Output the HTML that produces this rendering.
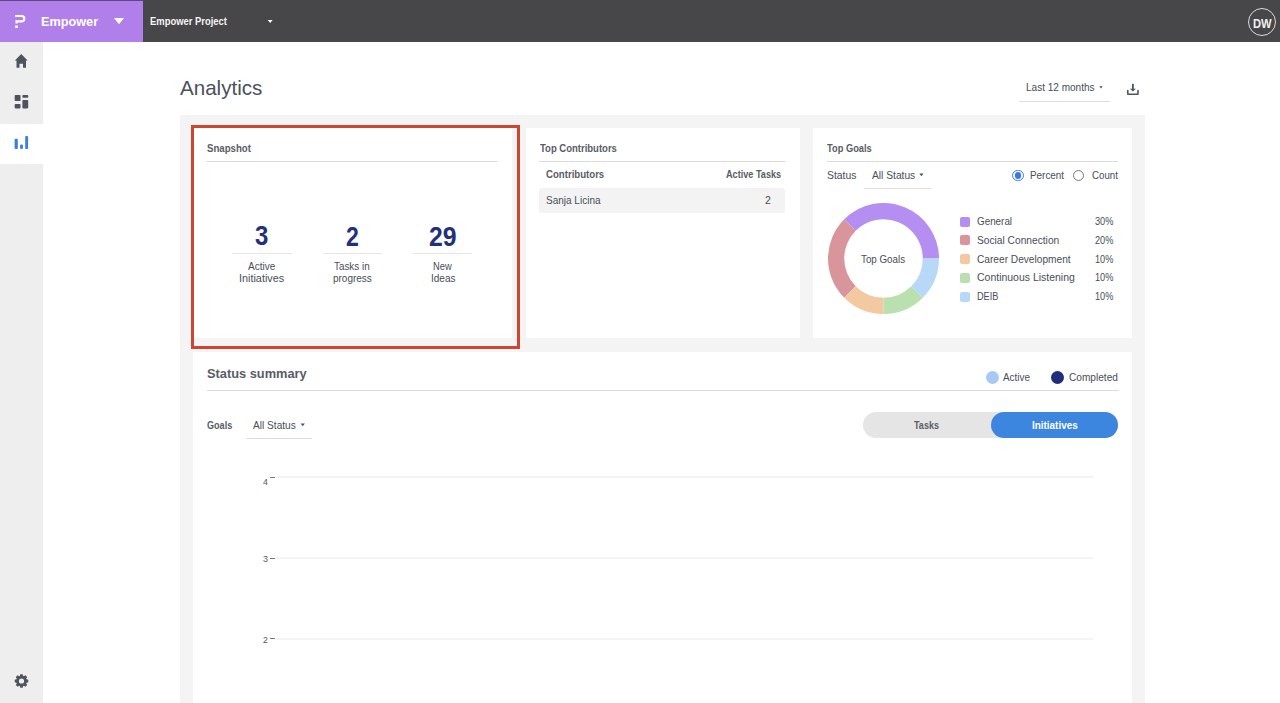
<!DOCTYPE html>
<html><head><meta charset="utf-8"><style>
html,body{margin:0;padding:0;}
body{width:1280px;height:703px;overflow:hidden;position:relative;background:#fff;font-family:"Liberation Sans", sans-serif;}
.a{position:absolute;}
.t{position:absolute;white-space:nowrap;}
</style></head><body>
<!-- top bar -->
<div class="a" style="left:0;top:0;width:1280px;height:42px;background:#474648"></div>
<div class="a" style="left:0;top:0;width:143px;height:42px;background:#b07fe9"></div>
<div class="a" style="left:0;top:0;width:143px;height:1px;background:#5f4486"></div>
<svg class="a" style="left:0;top:0" width="143" height="42">
  <path d="M15.1 16 H21.6 A2.65 2.65 0 0 1 21.6 21.3 H16.5 V23.6" fill="none" stroke="#fff" stroke-width="2.2"/>
  <rect x="15.1" y="25.5" width="2.8" height="2.4" fill="#fff"/>
  <path d="M114 18 L124 18 L119 24.3 Z" fill="#fff"/>
</svg>
<svg class="a" style="left:260px;top:15px" width="20" height="12">
  <path d="M7.8 5 L12.6 5 L10.2 7.9 Z" fill="#fff"/>
</svg>
<div class="a" style="left:1248px;top:8px;width:28px;height:28px;border:1.5px solid #dcdcdc;border-radius:50%;box-sizing:border-box"></div>
<!-- sidebar -->
<div class="a" style="left:0;top:42px;width:43px;height:661px;background:#eeeeee"></div>
<div class="a" style="left:0;top:124px;width:43px;height:40px;background:#ffffff"></div>
<svg class="a" style="left:0;top:42px" width="43" height="661">
  <path d="M21.2 12 L27.6 18.6 L26 18.6 L26 25.7 L23 25.7 L23 21.7 L19.5 21.7 L19.5 25.7 L16.5 25.7 L16.5 18.6 L14.9 18.6 Z" fill="#4e535d"/>
  <rect x="14.7" y="53" width="5.8" height="6" rx="0.8" fill="#4e535d"/>
  <rect x="14.7" y="62" width="5.8" height="4.4" rx="0.8" fill="#4e535d"/>
  <rect x="22.4" y="53" width="5.8" height="2.8" rx="0.8" fill="#4e535d"/>
  <rect x="22.4" y="58" width="5.8" height="8.4" rx="0.8" fill="#4e535d"/>
  <rect x="14.6" y="96.8" width="3.2" height="10.3" rx="1" fill="#3c7fd6"/>
  <rect x="20.1" y="102.5" width="2.8" height="4.6" rx="1" fill="#3c7fd6"/>
  <rect x="25.2" y="94" width="2.9" height="13.1" rx="1" fill="#3c7fd6"/>
</svg>
<svg class="a" style="left:0;top:0" width="43" height="703"><path fill="#4e535d" fill-rule="evenodd" d="M19.83 675.97 L20.26 674.21 L22.74 674.21 L23.17 675.97 L23.87 676.26 L25.42 675.32 L27.18 677.08 L26.24 678.63 L26.53 679.33 L28.29 679.76 L28.29 682.24 L26.53 682.67 L26.24 683.37 L27.18 684.92 L25.42 686.68 L23.87 685.74 L23.17 686.03 L22.74 687.79 L20.26 687.79 L19.83 686.03 L19.13 685.74 L17.58 686.68 L15.82 684.92 L16.76 683.37 L16.47 682.67 L14.71 682.24 L14.71 679.76 L16.47 679.33 L16.76 678.63 L15.82 677.08 L17.58 675.32 L19.13 676.26 Z M18.90 681 A2.6 2.6 0 1 0 24.10 681 A2.6 2.6 0 1 0 18.90 681 Z"/></svg>
<!-- header controls -->
<svg class="a" style="left:1090px;top:80px" width="60" height="20">
  <path d="M9.2 6.2 L12.8 6.2 L11 8.6 Z" fill="#4e535d"/>
  <rect x="42" y="3.8" width="1.8" height="5.4" fill="#50555e"/>
  <path d="M39.9 8.7 L45.9 8.7 L42.9 11.5 Z" fill="#50555e"/>
  <path d="M37.8 10.6 V14.2 H48 V10.6" fill="none" stroke="#50555e" stroke-width="1.6" stroke-linejoin="round" stroke-linecap="round"/>
</svg>
<div class="a" style="left:1019px;top:100.5px;width:91px;height:1px;background:#dedede"></div>
<!-- container -->
<div class="a" style="left:180px;top:115px;width:965px;height:588px;background:#f4f4f4"></div>
<div class="a" style="left:193px;top:128px;width:319px;height:210px;background:#fff"></div>
<div class="a" style="left:526px;top:128px;width:274px;height:210px;background:#fff"></div>
<div class="a" style="left:813px;top:128px;width:319px;height:210px;background:#fff"></div>
<div class="a" style="left:193px;top:352px;width:939px;height:351px;background:#fff"></div>
<div class="a" style="left:191px;top:125px;width:329px;height:223.5px;border:3px solid #cf4534;box-sizing:border-box"></div>
<!-- underlines -->
<div class="a" style="left:206px;top:161px;width:292px;height:1px;background:#dcdcdc"></div>
<div class="a" style="left:539px;top:161px;width:247px;height:1px;background:#dcdcdc"></div>
<div class="a" style="left:827px;top:161px;width:291px;height:1px;background:#dcdcdc"></div>
<div class="a" style="left:207px;top:390px;width:912px;height:1px;background:#dcdcdc"></div>
<!-- snapshot dividers -->
<div class="a" style="left:232px;top:253px;width:60px;height:1px;background:#e6e6e6"></div>
<div class="a" style="left:323px;top:253px;width:59px;height:1px;background:#e6e6e6"></div>
<div class="a" style="left:413px;top:253px;width:59px;height:1px;background:#e6e6e6"></div>
<!-- TC row -->
<div class="a" style="left:539px;top:188px;width:246px;height:24.5px;background:#f3f3f3;border-radius:3px"></div>
<!-- TG controls -->
<div class="a" style="left:864px;top:188px;width:67px;height:1px;background:#dedede"></div>
<svg class="a" style="left:900px;top:160px" width="40" height="30">
  <path d="M19.3 13.4 L23.6 13.4 L21.45 16.2 Z" fill="#4e535d"/>
</svg>
<div class="a" style="left:1012.3px;top:169.7px;width:11.4px;height:11.4px;border:1px solid #3b78e7;border-radius:50%;box-sizing:border-box;background:#fff"></div>
<div class="a" style="left:1014.8px;top:172.2px;width:6.4px;height:6.4px;border-radius:50%;background:#3b78e7"></div>
<div class="a" style="left:1072.9px;top:169.7px;width:11.4px;height:11.4px;border:1px solid #777;border-radius:50%;box-sizing:border-box;background:#fff"></div>
<!-- donut -->
<svg class="a" style="left:823px;top:198px" width="121" height="121" viewBox="-60.5 -60.5 121 121">
  <path d="M-39.244 -39.244 A55.5 55.5 0 0 1 55.500 -0.000 L39.300 -0.000 A39.3 39.3 0 0 0 -27.789 -27.789 Z" fill="#b48ef0"/><path d="M-39.244 39.244 A55.5 55.5 0 0 1 -39.244 -39.244 L-27.789 -27.789 A39.3 39.3 0 0 0 -27.789 27.789 Z" fill="#d9959c"/><path d="M0.000 55.500 A55.5 55.5 0 0 1 -39.244 39.244 L-27.789 27.789 A39.3 39.3 0 0 0 0.000 39.300 Z" fill="#f2c9a1"/><path d="M39.244 39.244 A55.5 55.5 0 0 1 0.000 55.500 L0.000 39.300 A39.3 39.3 0 0 0 27.789 27.789 Z" fill="#b9e0ae"/><path d="M55.500 -0.000 A55.5 55.5 0 0 1 39.244 39.244 L27.789 27.789 A39.3 39.3 0 0 0 39.300 -0.000 Z" fill="#b8d8f8"/>
</svg>
<!-- legend swatches -->
<div class="a" style="left:960px;top:216.5px;width:10px;height:10px;border-radius:2px;background:#b48ef0"></div>
<div class="a" style="left:960px;top:235.3px;width:10px;height:10px;border-radius:2px;background:#d9959c"></div>
<div class="a" style="left:960px;top:254.1px;width:10px;height:10px;border-radius:2px;background:#f2c9a1"></div>
<div class="a" style="left:960px;top:272.9px;width:10px;height:10px;border-radius:2px;background:#b9e0ae"></div>
<div class="a" style="left:960px;top:291.7px;width:10px;height:10px;border-radius:2px;background:#b8d8f8"></div>
<!-- status legend -->
<div class="a" style="left:985.9px;top:371.1px;width:13.4px;height:13.4px;border-radius:50%;background:#a9c9f5"></div>
<div class="a" style="left:1050.9px;top:371.1px;width:13.4px;height:13.4px;border-radius:50%;background:#1f2e7b"></div>
<!-- goals select -->
<div class="a" style="left:246px;top:438px;width:66px;height:1px;background:#dedede"></div>
<svg class="a" style="left:290px;top:415px" width="20" height="20">
  <path d="M10.6 8.4 L14.9 8.4 L12.75 11.2 Z" fill="#4e535d"/>
</svg>
<!-- toggle -->
<div class="a" style="left:863px;top:411.75px;width:255.25px;height:26.5px;border-radius:13.25px;background:#e5e5e5"></div>
<div class="a" style="left:990.5px;top:411.75px;width:127.75px;height:26.5px;border-radius:13.25px;background:#3d86df"></div>
<!-- chart -->
<div class="a" style="left:276px;top:476px;width:817px;height:2px;background:#f4f4f4"></div>
<div class="a" style="left:276px;top:557px;width:817px;height:2px;background:#f4f4f4"></div>
<div class="a" style="left:276px;top:638px;width:817px;height:2px;background:#f4f4f4"></div>
<div class="a" style="left:269.7px;top:476.6px;width:5.4px;height:1px;background:#777"></div>
<div class="a" style="left:269.7px;top:557.5px;width:5.4px;height:1px;background:#777"></div>
<div class="a" style="left:269.7px;top:638px;width:5.4px;height:1px;background:#777"></div>

<div id="t0" class="t" style="left:41.43px;top:14.90px;font-size:13.5px;line-height:13.5px;font-weight:700;color:#ffffff;transform-origin:0 0;transform:scaleX(0.9394);">Empower</div>
<div id="t1" class="t" style="left:150.17px;top:15.91px;font-size:10.5px;line-height:10.5px;font-weight:700;color:#f4f4f4;transform-origin:0 0;transform:scaleX(0.8966);">Empower Project</div>
<div id="t2" class="t" style="left:1252.85px;top:16.81px;font-size:13.6px;line-height:13.6px;font-weight:700;color:#f0f0f0;transform-origin:0 0;transform:scaleX(0.8225);">DW</div>
<div id="t3" class="t" style="left:179.99px;top:77.71px;font-size:20.7px;line-height:20.7px;font-weight:400;color:#4b505a;transform-origin:0 0;transform:scaleX(0.9940);">Analytics</div>
<div id="t4" class="t" style="left:1025.80px;top:82.81px;font-size:10.2px;line-height:10.2px;font-weight:400;color:#494e57;transform-origin:0 0;transform:scaleX(0.9843);">Last 12 months</div>
<div id="t5" class="t" style="left:206.82px;top:142.91px;font-size:10.5px;line-height:10.5px;font-weight:700;color:#585d66;transform-origin:0 0;transform:scaleX(0.9167);">Snapshot</div>
<div id="t6" class="t" style="left:255.39px;top:223.41px;font-size:27px;line-height:27px;font-weight:700;color:#23307a;transform-origin:0 0;transform:scaleX(0.8868);">3</div>
<div id="t7" class="t" style="left:345.62px;top:223.51px;font-size:27px;line-height:27px;font-weight:700;color:#23307a;transform-origin:0 0;transform:scaleX(0.8549);">2</div>
<div id="t8" class="t" style="left:429.20px;top:223.51px;font-size:27px;line-height:27px;font-weight:700;color:#23307a;transform-origin:0 0;transform:scaleX(0.9170);">29</div>
<div id="t9" class="t" style="left:247.76px;top:261.71px;font-size:10.2px;line-height:10.2px;font-weight:400;color:#494e57;transform-origin:0 0;transform:scaleX(0.9825);">Active</div>
<div id="t10" class="t" style="left:239.46px;top:273.71px;font-size:10.2px;line-height:10.2px;font-weight:400;color:#494e57;transform-origin:0 0;transform:scaleX(1.0632);">Initiatives</div>
<div id="t11" class="t" style="left:334.20px;top:261.81px;font-size:10.2px;line-height:10.2px;font-weight:400;color:#494e57;transform-origin:0 0;transform:scaleX(0.9678);">Tasks in</div>
<div id="t12" class="t" style="left:332.93px;top:273.71px;font-size:10.2px;line-height:10.2px;font-weight:400;color:#494e57;transform-origin:0 0;transform:scaleX(0.9777);">progress</div>
<div id="t13" class="t" style="left:433.09px;top:261.81px;font-size:10.2px;line-height:10.2px;font-weight:400;color:#494e57;transform-origin:0 0;transform:scaleX(0.9153);">New</div>
<div id="t14" class="t" style="left:430.90px;top:273.71px;font-size:10.2px;line-height:10.2px;font-weight:400;color:#494e57;transform-origin:0 0;transform:scaleX(0.9842);">Ideas</div>
<div id="t15" class="t" style="left:539.83px;top:142.81px;font-size:10.5px;line-height:10.5px;font-weight:700;color:#585d66;transform-origin:0 0;transform:scaleX(0.9048);">Top Contributors</div>
<div id="t16" class="t" style="left:546.00px;top:169.00px;font-size:10.5px;line-height:10.5px;font-weight:700;color:#585d66;transform-origin:0 0;transform:scaleX(0.9157);">Contributors</div>
<div id="t17" class="t" style="left:726.31px;top:169.00px;font-size:10.5px;line-height:10.5px;font-weight:700;color:#585d66;transform-origin:0 0;transform:scaleX(0.8690);">Active Tasks</div>
<div id="t18" class="t" style="left:546.00px;top:194.81px;font-size:10.5px;line-height:10.5px;font-weight:400;color:#494e57;transform-origin:0 0;transform:scaleX(0.9529);">Sanja Licina</div>
<div id="t19" class="t" style="left:765.00px;top:194.81px;font-size:10.5px;line-height:10.5px;font-weight:400;color:#494e57;transform-origin:0 0;transform:scaleX(1.0000);">2</div>
<div id="t20" class="t" style="left:827.16px;top:142.91px;font-size:10.5px;line-height:10.5px;font-weight:700;color:#585d66;transform-origin:0 0;transform:scaleX(0.8845);">Top Goals</div>
<div id="t21" class="t" style="left:826.70px;top:170.61px;font-size:10.2px;line-height:10.2px;font-weight:400;color:#494e57;transform-origin:0 0;transform:scaleX(1.0186);">Status</div>
<div id="t22" class="t" style="left:871.79px;top:170.61px;font-size:10.2px;line-height:10.2px;font-weight:400;color:#494e57;transform-origin:0 0;transform:scaleX(1.0048);">All Status</div>
<div id="t23" class="t" style="left:1030.01px;top:170.81px;font-size:10.2px;line-height:10.2px;font-weight:400;color:#494e57;transform-origin:0 0;transform:scaleX(0.9714);">Percent</div>
<div id="t24" class="t" style="left:1091.61px;top:170.81px;font-size:10.2px;line-height:10.2px;font-weight:400;color:#494e57;transform-origin:0 0;transform:scaleX(0.9519);">Count</div>
<div id="t25" class="t" style="left:976.61px;top:216.90px;font-size:10.2px;line-height:10.2px;font-weight:400;color:#494e57;transform-origin:0 0;transform:scaleX(0.9670);">General</div>
<div id="t26" class="t" style="left:1094.79px;top:216.90px;font-size:10.2px;line-height:10.2px;font-weight:400;color:#494e57;transform-origin:0 0;transform:scaleX(0.9025);">30%</div>
<div id="t27" class="t" style="left:976.60px;top:235.71px;font-size:10.2px;line-height:10.2px;font-weight:400;color:#494e57;transform-origin:0 0;transform:scaleX(1.0013);">Social Connection</div>
<div id="t28" class="t" style="left:1094.79px;top:235.71px;font-size:10.2px;line-height:10.2px;font-weight:400;color:#494e57;transform-origin:0 0;transform:scaleX(0.9025);">20%</div>
<div id="t29" class="t" style="left:976.60px;top:254.50px;font-size:10.2px;line-height:10.2px;font-weight:400;color:#494e57;transform-origin:0 0;transform:scaleX(0.9958);">Career Development</div>
<div id="t30" class="t" style="left:1094.79px;top:254.50px;font-size:10.2px;line-height:10.2px;font-weight:400;color:#494e57;transform-origin:0 0;transform:scaleX(0.9025);">10%</div>
<div id="t31" class="t" style="left:976.60px;top:273.31px;font-size:10.2px;line-height:10.2px;font-weight:400;color:#494e57;transform-origin:0 0;transform:scaleX(1.0284);">Continuous Listening</div>
<div id="t32" class="t" style="left:1094.79px;top:273.31px;font-size:10.2px;line-height:10.2px;font-weight:400;color:#494e57;transform-origin:0 0;transform:scaleX(0.9025);">10%</div>
<div id="t33" class="t" style="left:976.61px;top:292.11px;font-size:10.2px;line-height:10.2px;font-weight:400;color:#494e57;transform-origin:0 0;transform:scaleX(0.9002);">DEIB</div>
<div id="t34" class="t" style="left:1094.79px;top:292.11px;font-size:10.2px;line-height:10.2px;font-weight:400;color:#494e57;transform-origin:0 0;transform:scaleX(0.9025);">10%</div>
<div id="t35" class="t" style="left:861.00px;top:254.50px;font-size:10.2px;line-height:10.2px;font-weight:400;color:#494e57;transform-origin:0 0;transform:scaleX(0.9610);">Top Goals</div>
<div id="t36" class="t" style="left:207.20px;top:368.31px;font-size:12.9px;line-height:12.9px;font-weight:700;color:#585d66;transform-origin:0 0;transform:scaleX(0.9940);">Status summary</div>
<div id="t37" class="t" style="left:1002.81px;top:373.00px;font-size:10.2px;line-height:10.2px;font-weight:400;color:#494e57;transform-origin:0 0;transform:scaleX(0.9718);">Active</div>
<div id="t38" class="t" style="left:1068.99px;top:373.00px;font-size:10.2px;line-height:10.2px;font-weight:400;color:#494e57;transform-origin:0 0;transform:scaleX(0.9920);">Completed</div>
<div id="t39" class="t" style="left:207.23px;top:420.61px;font-size:10.2px;line-height:10.2px;font-weight:700;color:#585d66;transform-origin:0 0;transform:scaleX(0.8898);">Goals</div>
<div id="t40" class="t" style="left:253.18px;top:420.61px;font-size:10.2px;line-height:10.2px;font-weight:400;color:#494e57;transform-origin:0 0;transform:scaleX(0.9936);">All Status</div>
<div id="t41" class="t" style="left:913.97px;top:419.75px;font-size:10.5px;line-height:10.5px;font-weight:700;color:#5a5e66;transform-origin:0 0;transform:scaleX(0.8621);">Tasks</div>
<div id="t42" class="t" style="left:1032.01px;top:419.75px;font-size:10.5px;line-height:10.5px;font-weight:700;color:#ffffff;transform-origin:0 0;transform:scaleX(0.9428);">Initiatives</div>
<div id="t43" class="t" style="left:262.62px;top:476.91px;font-size:9.8px;line-height:9.8px;font-weight:400;color:#555;transform-origin:0 0;transform:scaleX(0.8847);">4</div>
<div id="t44" class="t" style="left:262.57px;top:553.91px;font-size:9.8px;line-height:9.8px;font-weight:400;color:#555;transform-origin:0 0;transform:scaleX(0.9216);">3</div>
<div id="t45" class="t" style="left:262.62px;top:634.60px;font-size:9.8px;line-height:9.8px;font-weight:400;color:#555;transform-origin:0 0;transform:scaleX(0.8847);">2</div>
</body></html>
